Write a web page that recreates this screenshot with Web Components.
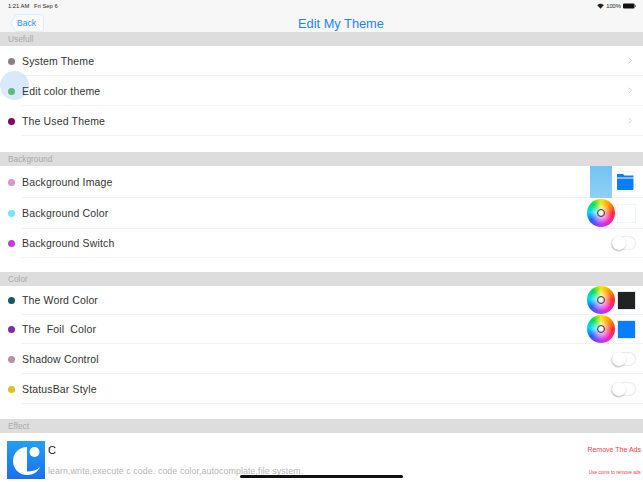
<!DOCTYPE html>
<html>
<head>
<meta charset="utf-8">
<title>Edit My Theme</title>
<style>
  html, body { margin: 0; padding: 0; background: white; }
  body { width: 643px; height: 482px; overflow: hidden; position: relative; font-family: "Liberation Sans", sans-serif; }
</style>
</head>
<body>
<theme-nav></theme-nav>

<section-head>Usefull</section-head>
<theme-row dot="#8e7f7f" h="30">System Theme<row-chevron slot="end"></row-chevron></theme-row>
<theme-row dot="#6cc95c" h="30">Edit color theme<row-chevron slot="end"></row-chevron></theme-row>
<theme-row dot="#86005f" h="30">The Used Theme<row-chevron slot="end"></row-chevron></theme-row>
<div style="height:16px"></div>

<section-head>Background</section-head>
<theme-row dot="#d795c8" h="32">Background Image
  <div slot="end" style="display:flex;align-items:center;gap:2px">
    <div style="width:22px;height:32px;background:linear-gradient(#74c3f3,#8fd0f6)"></div>
    <folder-button></folder-button>
  </div>
</theme-row>
<theme-row dot="#72e6f2" h="31">Background Color
  <color-pick slot="end" swatch="#ffffff"></color-pick>
</theme-row>
<theme-row dot="#c23fd6" h="29">Background Switch<toggle-off slot="end"></toggle-off></theme-row>
<div style="height:14px"></div>

<section-head>Color</section-head>
<theme-row dot="#1d5361" h="29">The Word Color
  <color-pick slot="end" swatch="#222222"></color-pick>
</theme-row>
<theme-row dot="#7f2aa8" h="29">The&nbsp; Foil&nbsp; Color
  <color-pick slot="end" swatch="#0a7dff"></color-pick>
</theme-row>
<theme-row dot="#b98fa3" h="30">Shadow Control<toggle-off slot="end"></toggle-off></theme-row>
<theme-row dot="#dcc41c" h="30">StatusBar Style<toggle-off slot="end"></toggle-off></theme-row>
<div style="height:15px"></div>

<section-head>Effect</section-head>
<ad-row></ad-row>

<touch-mark></touch-mark>
<home-bar></home-bar>

<script>
customElements.define("theme-nav", class extends HTMLElement {
  constructor() {
    super();
    this.attachShadow({ mode: "open" }).innerHTML = `
      <style>
        :host { display: block; height: 32px; background: #f7f7f7; color: #000; position: relative; }
        .status { height: 12px; display: flex; justify-content: space-between; align-items: center; padding: 0 7px 0 8px; font-size: 5.8px; line-height: 12px; color: #222; }
        .right { display: flex; align-items: center; gap: 2px; }
        .bar { height: 20px; display: flex; align-items: center; justify-content: center; position: relative; }
        h1 { margin: 0; font-size: 12.8px; font-weight: 400; color: #1a86fb; padding: 2px 0 0 39px; }
        .back { position: absolute; left: 10px; top: 2px; display: flex; height: 18px; }
        .back svg { display: block; }
        .back span { position: absolute; left: 7px; top: 0; line-height: 18px; font-size: 8.6px; color: #2b8ffb; }
      </style>
      <div class="status">
        <span>1:21 AM &nbsp; Fri Sep 6</span>
        <span class="right">
          <svg width="7" height="6" viewBox="0 0 14 12"><path d="M7 11.5 0.5 4.5C4 0.5 10 0.5 13.5 4.5Z" fill="#222"/></svg>
          <span>100%</span>
          <svg width="13" height="6" viewBox="0 0 13 6"><rect x="0" y="0.5" width="11.5" height="5" rx="1" fill="#111"/><rect x="12" y="2" width="1" height="2" fill="#777"/></svg>
        </span>
      </div>
      <div class="bar">
        <div class="back">
          <svg width="34" height="18" viewBox="0 0 34 18"><path d="M0.5 9 6 0.5H30.500Q33.500 0.5 33.500 3.500V14.500Q33.500 17.500 30.500 17.500H6Z" fill="#f9fbff" stroke="#dcebfb"/></svg>
          <span>Back</span>
        </div>
        <h1>Edit My Theme</h1>
      </div>`;
  }
});

customElements.define("section-head", class extends HTMLElement {
  constructor() {
    super();
    this.attachShadow({ mode: "open" }).innerHTML = `
      <style>
        :host { display: flex; align-items: center; height: 14px; background: #dddddd; color: #a9a9a9; font-size: 8.3px; padding-left: 8px; box-sizing: border-box; }
      </style>
      <slot></slot>`;
  }
});

customElements.define("theme-row", class extends HTMLElement {
  constructor() {
    super();
    this.shadow = this.attachShadow({ mode: "open" });
  }
  connectedCallback() {
    const dot = this.getAttribute("dot");
    const h = this.getAttribute("h");
    this.shadow.innerHTML = `
      <style>
        :host { display: flex; align-items: center; height: ${h}px; background: white; position: relative; color: #333; font-size: 10.5px; }
        .dot { width: 7px; height: 7px; border-radius: 50%; background: ${dot}; margin: 0 7.5px; flex: none; }
        .body { flex: 1; align-self: stretch; display: flex; align-items: center; justify-content: space-between; border-bottom: 1px solid #f2f2f2; box-sizing: border-box; padding-right: 7px; letter-spacing: 0.15px; }
      </style>
      <span class="dot"></span>
      <div class="body"><span><slot></slot></span><slot name="end"></slot></div>`;
  }
});

customElements.define("row-chevron", class extends HTMLElement {
  constructor() {
    super();
    this.attachShadow({ mode: "open" }).innerHTML = `
      <style>:host { display: block; height: 7px; }</style>
      <svg width="4" height="7" viewBox="0 0 4 7" style="display:block;margin-right:4px"><path d="M0.7 0.7 3.3 3.5 0.7 6.3" fill="none" stroke="#d4d4d4"/></svg>`;
  }
});

customElements.define("toggle-off", class extends HTMLElement {
  constructor() {
    super();
    this.attachShadow({ mode: "open" }).innerHTML = `
      <style>
        :host { display: block; width: 24px; height: 14px; border-radius: 7px; background: #fff; box-shadow: inset 0 0 0 1px #ececec; position: relative; }
        i { position: absolute; left: 0; top: 0; width: 14px; height: 14px; border-radius: 50%; background: #fff; box-shadow: -0.5px 1px 2px rgba(0,0,0,.3); }
      </style>
      <i></i>`;
  }
});

customElements.define("color-pick", class extends HTMLElement {
  constructor() {
    super();
    const sw = this.getAttribute("swatch");
    this.attachShadow({ mode: "open" }).innerHTML = `
      <style>
        :host { display: flex; align-items: center; gap: 2px; }
        .wheel { width: 28px; height: 28px; border-radius: 50%; position: relative;
          background: radial-gradient(closest-side, #fff 0, rgba(255,255,255,.7) 25%, rgba(255,255,255,0) 80%),
            conic-gradient(#f8e800, #ff8a00 50deg, #ff2a2a 90deg, #ff20c0 140deg, #a040ff 190deg, #2060ff 235deg, #00d8ff 275deg, #00e050 320deg, #f8e800); }
        .wheel i { position: absolute; left: 10px; top: 10px; width: 8px; height: 8px; box-sizing: border-box; border: 1.2px solid #333; border-radius: 50%; }
        .sw { width: 19px; height: 19px; box-sizing: border-box; background: ${sw}; border: 1px solid ${sw === "#ffffff" ? "#eef5fd" : "#dfeaf6"}; }
      </style>
      <div class="wheel"><i></i></div><div class="sw"></div>`;
  }
});

customElements.define("folder-button", class extends HTMLElement {
  constructor() {
    super();
    this.attachShadow({ mode: "open" }).innerHTML = `
      <style>:host { display: block; width: 22px; height: 21px; border: 1px solid #eef5fd; border-radius: 3px; box-sizing: border-box; }</style>
      <svg width="20" height="19" viewBox="0 0 20 19" style="display:block"><path d="M2 2H8L9.500 3.500H18.500V5.500H2Z" fill="#0a7dff"/><path d="M2 6.500H18.500V17Q18.500 18 17.500 18H3Q2 18 2 17Z" fill="#0a7dff"/></svg>`;
  }
});

customElements.define("ad-row", class extends HTMLElement {
  constructor() {
    super();
    this.attachShadow({ mode: "open" }).innerHTML = `
      <style>
        :host { display: flex; height: 50px; padding: 8px 2px 0 7px; box-sizing: border-box; background: #fff; gap: 3px; }
        svg { display: block; flex: none; }
        .txt { flex: 1; display: flex; flex-direction: column; justify-content: space-between; padding: 1px 0 2px; height: 38px; box-sizing: border-box; }
        .name { font-size: 11px; color: #222; line-height: 16px; }
        .desc { font-size: 8.8px; color: #b5b5b5; line-height: 12px; letter-spacing: 0.1px; }
        .ads { display: flex; flex-direction: column; align-items: flex-end; color: #ff3b45; }
        .ads b { font-weight: 400; font-size: 7px; margin-top: 3px; line-height: 12px; }
        .ads small { font-size: 4.75px; margin-top: 13px; line-height: 8px; }
      </style>
      <svg width="38" height="38" viewBox="0 0 38 38">
        <defs><linearGradient id="g" x1="0" y1="0" x2="0" y2="1"><stop offset="0" stop-color="#22a0f2"/><stop offset="1" stop-color="#1a6ff0"/></linearGradient></defs>
        <rect width="38" height="38" fill="url(#g)"/>
        <path d="M20 6A14 14 0 0 0 20 34C26 34 31 31 33 26C30 29 25 30.500 20 30.500Z" fill="#fff"/>
        <circle cx="27.500" cy="11" r="5" fill="#fff"/>
      </svg>
      <div class="txt"><div class="name">C</div><div class="desc">learn,write,execute c code. code color,autocomplate,file system.</div></div>
      <div class="ads"><b>Remove The Ads</b><small>Use coins to remove ads</small></div>`;
  }
});

customElements.define("touch-mark", class extends HTMLElement {
  constructor() {
    super();
    this.attachShadow({ mode: "open" }).innerHTML = `
      <style>:host { position: absolute; left: 0; top: 71px; width: 29px; height: 29px; border-radius: 50%; background: rgba(30,125,240,.17); }</style>`;
  }
});

customElements.define("home-bar", class extends HTMLElement {
  constructor() {
    super();
    this.attachShadow({ mode: "open" }).innerHTML = `
      <style>:host { position: absolute; left: 240px; top: 475px; width: 163px; height: 3px; border-radius: 2px; background: #111; }</style>`;
  }
});
</script>
</body>
</html>
